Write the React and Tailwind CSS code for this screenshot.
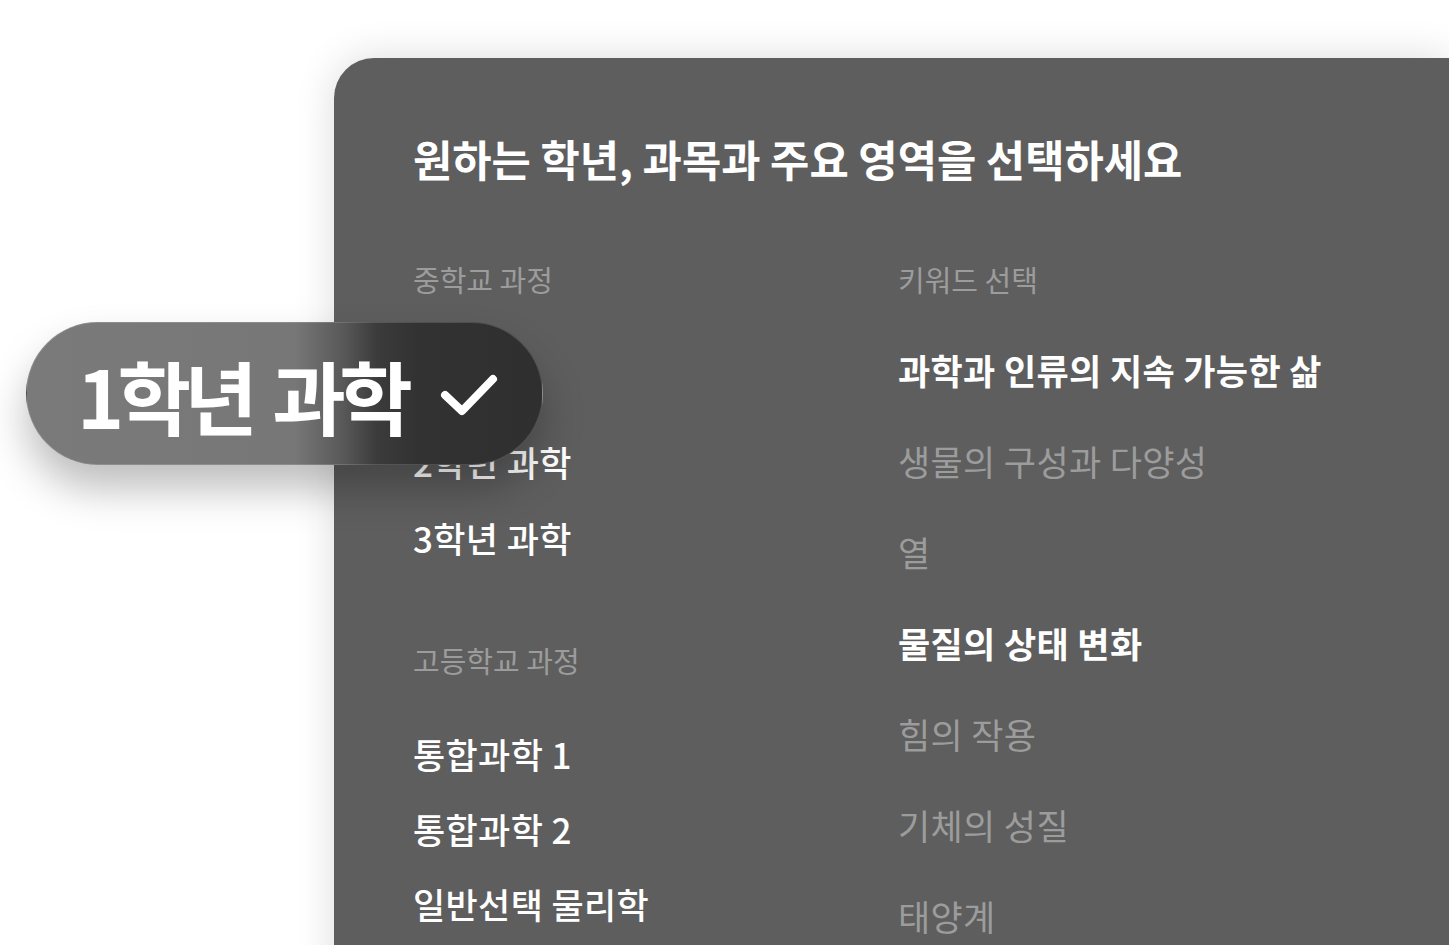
import { useState } from "react";

const middleSchool = ["1학년 과학", "2학년 과학", "3학년 과학"];
const highSchool = ["통합과학 1", "통합과학 2", "일반선택 물리학"];

const keywords = [
  { label: "과학과 인류의 지속 가능한 삶", active: true },
  { label: "생물의 구성과 다양성", active: false },
  { label: "열", active: false },
  { label: "물질의 상태 변화", active: true },
  { label: "힘의 작용", active: false },
  { label: "기체의 성질", active: false },
  { label: "태양계", active: false },
];

function SectionLabel({ children }) {
  return (
    <div className="text-[29px] leading-[36px] text-[#9c9c9c]">{children}</div>
  );
}

function SelectedPill({ label }) {
  return (
    <div className="absolute left-[26px] top-[322px] flex h-[143px] w-[517px] items-center rounded-full border border-white/15 bg-[linear-gradient(90deg,#7a7a7a_0%,#777777_52%,#5a5a5a_61%,#3b3b3b_68%,#323232_76%,#2f2f2f_100%)] pl-[50px] shadow-[0_24px_40px_rgba(0,0,0,0.26)]">
      <span className="text-[80px] font-bold leading-none tracking-[-0.085em] text-white [word-spacing:10px]">
        {label}
      </span>
      <svg
        width="60"
        height="46"
        viewBox="0 0 60 46"
        fill="none"
        className="ml-[32px]"
      >
        <path
          d="M7 24 L24 40 L55 8"
          stroke="white"
          strokeWidth="8"
          strokeLinecap="round"
          strokeLinejoin="round"
        />
      </svg>
    </div>
  );
}

export default function App() {
  const [grade] = useState("1학년 과학");

  return (
    <div className="relative h-[945px] w-full overflow-hidden bg-white font-['Noto_Sans_CJK_KR',sans-serif]">
      <div className="ml-[334px] mt-[58px] h-[1000px] rounded-tl-[40px] bg-[#5e5e5e] pl-[79px] pt-[76px] shadow-[0_0_40px_rgba(0,0,0,0.14)]">
        <h1 className="text-[42.7px] font-bold leading-[48px] text-white">
          원하는 학년, 과목과 주요 영역을 선택하세요
        </h1>

        <div className="mt-[79px] flex">
          {/* 학년 / 과목 */}
          <div className="w-[485px] shrink-0">
            <SectionLabel>중학교 과정</SectionLabel>
            <div className="mt-[69px] flex flex-col gap-[36px]">
              {middleSchool.map((item) => (
                <div
                  key={item}
                  className={
                    item === grade
                      ? "invisible text-[35px] font-medium leading-[40px] tracking-[0.01em] text-white"
                      : "text-[35px] font-medium leading-[40px] tracking-[0.01em] text-white"
                  }
                >
                  {item}
                </div>
              ))}
            </div>

            <div className="mt-[84px]">
              <SectionLabel>고등학교 과정</SectionLabel>
            </div>
            <div className="mt-[56px] flex flex-col gap-[35px]">
              {highSchool.map((item) => (
                <div
                  key={item}
                  className="text-[35px] font-medium leading-[40px] tracking-[0.01em] text-white"
                >
                  {item}
                </div>
              ))}
            </div>
          </div>

          {/* 키워드 */}
          <div>
            <SectionLabel>키워드 선택</SectionLabel>
            <div className="mt-[53px] flex flex-col gap-[51px]">
              {keywords.map((k) => (
                <div
                  key={k.label}
                  className={
                    k.active
                      ? "text-[35px] font-bold leading-[40px] tracking-[0.01em] text-white"
                      : "text-[35px] leading-[40px] tracking-[0.01em] text-[#9c9c9c]"
                  }
                >
                  {k.label}
                </div>
              ))}
            </div>
          </div>
        </div>
      </div>

      <SelectedPill label={grade} />
    </div>
  );
}
